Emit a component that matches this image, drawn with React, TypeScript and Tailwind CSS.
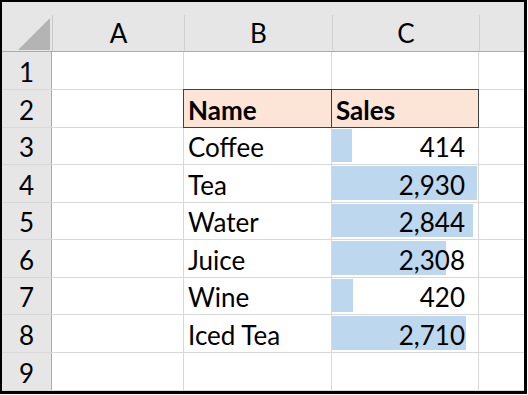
import React from "react";

const rows: { n: number; h: number; name?: string; sales?: number; header?: boolean }[] = [
  { n: 1, h: 38 },
  { n: 2, h: 38, header: true },
  { n: 3, h: 37, name: "Coffee", sales: 414 },
  { n: 4, h: 38, name: "Tea", sales: 2930 },
  { n: 5, h: 37, name: "Water", sales: 2844 },
  { n: 6, h: 38, name: "Juice", sales: 2308 },
  { n: 7, h: 37, name: "Wine", sales: 420 },
  { n: 8, h: 38, name: "Iced Tea", sales: 2710 },
  { n: 9, h: 38 },
];

const MAX = 2930;

export default function App() {
  return (
    <div className="w-[528px] h-[395px] bg-white">
      <div
        className="w-[527px] h-[394px] border-l-2 border-t-2 border-r-[3px] border-b-[3px] border-black flex flex-col bg-white text-black"
        style={{ fontFamily: "Lato, 'Noto Sans', sans-serif" }}
      >
        {/* column header */}
        <div className="h-[50px] flex bg-[#e6e6e6] border-b border-[#ababab]">
          <div className="w-[50px] relative">
            <svg className="absolute left-[16px] top-[16px]" width="32" height="32" viewBox="0 0 32 32">
              <polygon points="32,0 32,32 0,32" fill="#b4b4b4" />
            </svg>
          </div>
          <div className="w-[1px] mt-[13px] bg-[#c8c8c8]" />
          <div className="w-[131px] flex items-center justify-center pt-[14px] text-[26px]">A</div>
          <div className="w-[1px] mt-[13px] bg-[#d0d0d0]" />
          <div className="w-[147px] flex items-center justify-center pt-[14px] text-[26px]">B</div>
          <div className="w-[1px] mt-[13px] bg-[#d0d0d0]" />
          <div className="w-[146px] flex items-center justify-center pt-[14px] text-[26px]">C</div>
          <div className="w-[1px] mt-[13px] bg-[#d0d0d0]" />
          <div className="flex-1" />
        </div>
        {rows.map((r) => (
          <div key={r.n} className="flex border-b border-[#d8d8d8]" style={{ height: r.h }}>
            <div className="w-[50px] shrink-0 bg-[#e6e6e6] border-r border-[#ababab] flex items-center justify-center pt-[3px] text-[26px]">
              {r.n}
            </div>
            <div className="w-[132px] shrink-0 border-r border-[#d8d8d8]" />
            <div className="w-[148px] shrink-0 border-r border-[#d8d8d8] relative">
              {r.header && (
                <div className="absolute left-[-1px] top-[-1px] right-[-1px] bottom-[-1px] bg-[#fce4d6] border border-[#404040]" />
              )}
              <div className={`relative h-full flex items-center pl-[4px] pt-[3px] text-[26px] ${r.header ? "font-bold" : ""}`}>
                {r.header ? "Name" : r.name}
              </div>
            </div>
            <div className="w-[147px] shrink-0 border-r border-[#d8d8d8] relative">
              {r.header && (
                <div className="absolute left-[-1px] top-[-1px] right-[-1px] bottom-[-1px] bg-[#fce4d6] border border-[#404040]" />
              )}
              {r.sales !== undefined && (
                <div
                  className="absolute left-0 top-[1px] bottom-[2px] bg-[#bdd7ee]"
                  style={{ width: Math.round((r.sales / MAX) * 145) }}
                />
              )}
              {r.header ? (
                <div className="relative h-full flex items-center pl-[4px] pt-[3px] text-[26px] font-bold">Sales</div>
              ) : (
                <div className="relative h-full flex items-center justify-end pr-[13px] pt-[3px] text-[26px]">
                  {r.sales !== undefined ? r.sales.toLocaleString("en-US") : ""}
                </div>
              )}
            </div>
            <div className="flex-1" />
          </div>
        ))}
      </div>
    </div>
  );
}
